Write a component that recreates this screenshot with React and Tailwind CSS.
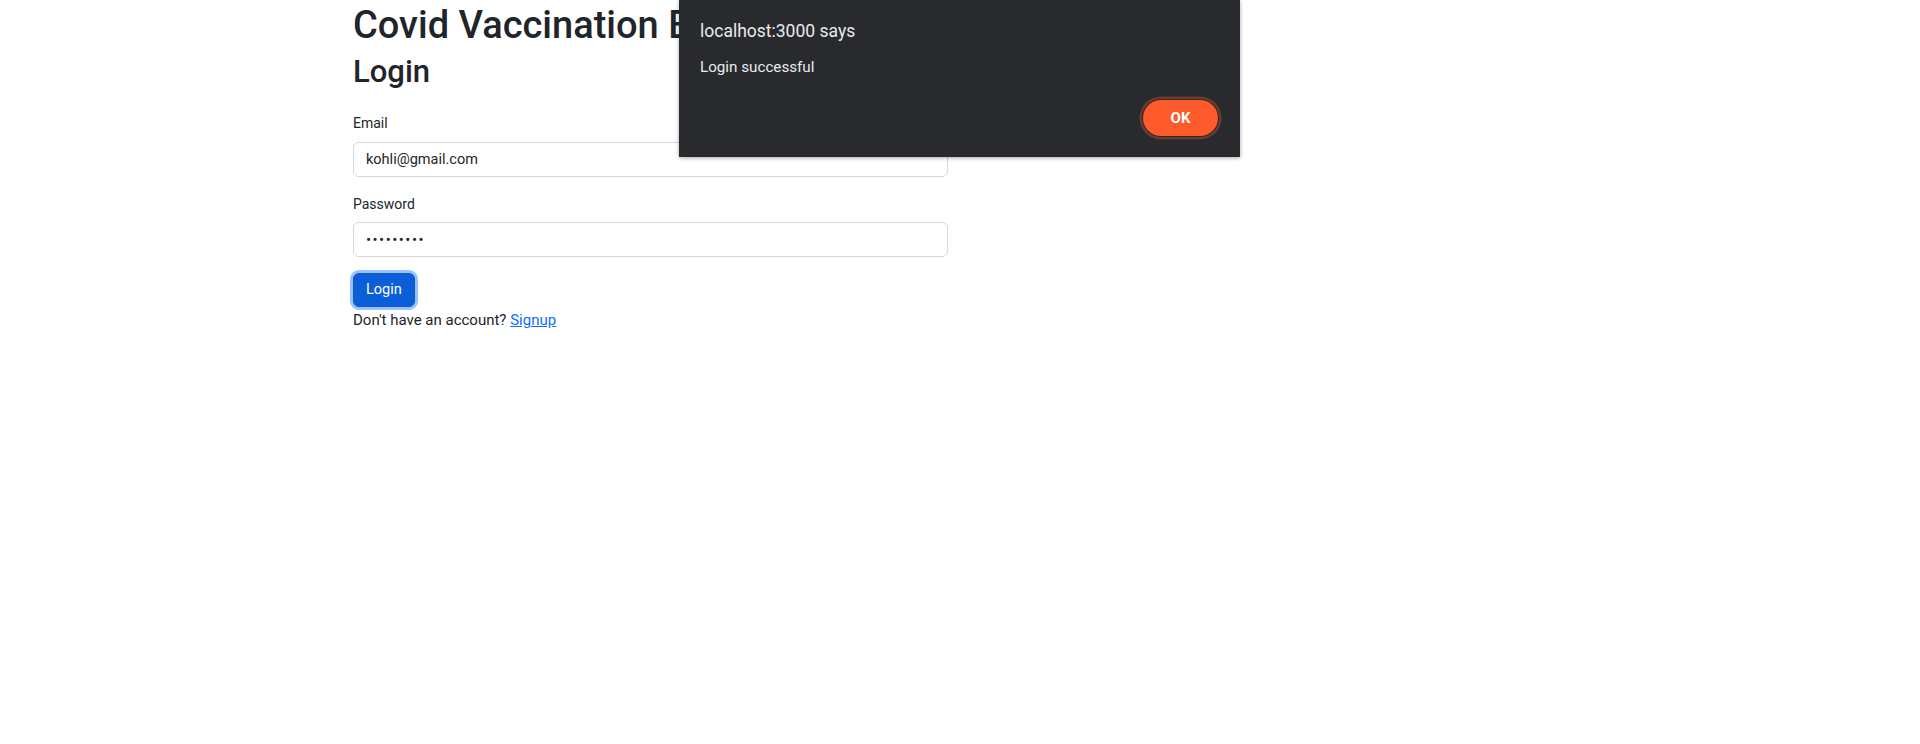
import { useState } from "react";

const App = () => {
    const [email, setEmail] = useState("kohli@gmail.com");
    const [password, setPassword] = useState("123456789");

    return (
        <div className="relative min-h-screen bg-white font-['Roboto',sans-serif] text-[#212529]">
            <div className="ml-[353px] w-[595px] pt-px">
                <h1 className="text-[38px] leading-[48px] font-medium mb-[4px] whitespace-nowrap">Covid Vaccination Booking</h1>
                <h2 className="text-[31px] leading-[38px] font-medium mb-[22px]">Login</h2>

                <form onSubmit={(e) => e.preventDefault()}>
                    <label className="block text-[14px] leading-[21px] mb-[8px]">Email</label>
                    <input
                        type="email"
                        value={email}
                        onChange={(e) => setEmail(e.target.value)}
                        className="block w-full h-[35px] px-[12px] text-[14.5px] text-[#212529] border border-[#d3d6da] rounded-[6px] outline-none"
                    />

                    <label className="block text-[14px] leading-[21px] mt-[17px] mb-[7px]">Password</label>
                    <input
                        type="password"
                        value={password}
                        onChange={(e) => setPassword(e.target.value)}
                        className="block w-full h-[35px] px-[12px] text-[15px] tracking-[1.5px] text-[#212529] border border-[#d3d6da] rounded-[6px] outline-none"
                    />

                    <button
                        type="submit"
                        className="mt-[16px] h-[34px] px-[12px] text-[14.5px] text-white bg-[#0b5ed7] border border-[#0a58ca] rounded-[6px] shadow-[0_0_0_3px_rgba(49,132,253,0.5)]"
                    >
                        Login
                    </button>
                </form>
                <p className="mt-[3px] text-[15px] leading-[21px]">
                    Don't have an account? <a href="#" className="text-[#0d6efd] underline">Signup</a>
                </p>
            </div>

            {/* browser alert */}
            <div className="absolute left-[679px] top-0 w-[561px] h-[157px] bg-[#292a2d] shadow-[0_1px_4px_rgba(0,0,0,0.35)] flex flex-col pt-[19px] pl-[21px] pr-[22px]">
                <div className="text-[17.5px] leading-[24px] text-[#e8eaed]">localhost:3000 says</div>
                <div className="mt-[14px] text-[15.2px] leading-[20px] text-[#e8eaed]">Login successful</div>
                <div className="mt-[23px] flex justify-end">
                    <button className="w-[75px] h-[36px] rounded-full bg-[#ff5a2b] text-white text-[15px] font-bold shadow-[0_0_0_1px_#292a2d,0_0_0_3.5px_#6d3a2b]">
                        OK
                    </button>
                </div>
            </div>
        </div>
    );
};

export default App;
